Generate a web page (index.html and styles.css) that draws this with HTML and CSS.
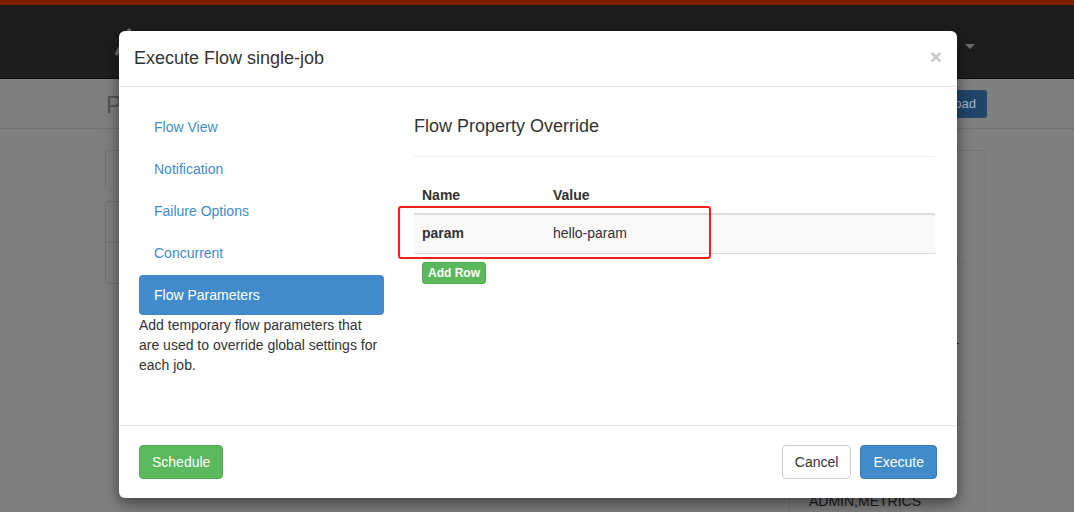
FILE: index.html
```html
<!DOCTYPE html>
<html>
<head>
<meta charset="utf-8">
<link rel="stylesheet" href="styles.css">
</head>
<body>
<div class="page">
  <div class="topbar"></div>
  <div class="navbar">
    <svg class="logo" width="40" height="40" viewBox="0 0 40 40"><polyline points="3,31 16,6 29,31" fill="none" stroke="#6e6e6e" stroke-width="3.5" stroke-linejoin="round"/></svg>
    <div class="user">n <span class="caret"></span></div>
  </div>
  <div class="pagehead">
    <div class="ph-title">Project</div>
    <div class="ph-btn">Upload</div>
  </div>
  <div class="main">
    <div class="leftcol">
      <div class="tabs"></div>
      <div class="listbox"><div class="li"></div><div class="li"></div></div>
    </div>
    <div class="sidepanel">
      <div class="sp-row sp-a"></div>
      <div class="sp-row sp-b"><span class="dash">-</span></div>
      <div class="sp-row sp-c"></div>
      <div class="sp-text">ADMIN,METRICS</div>
    </div>
  </div>
</div>

<div class="modal">
  <div class="modal-header">
    <span class="close">&times;</span>
    <h4 class="modal-title">Execute Flow single-job</h4>
  </div>
  <div class="modal-body">
    <div class="col-nav">
      <ul class="nav">
        <li><a>Flow View</a></li>
        <li><a>Notification</a></li>
        <li><a>Failure Options</a></li>
        <li><a>Concurrent</a></li>
        <li class="active"><a>Flow Parameters</a></li>
      </ul>
      <p class="help">Add temporary flow parameters that are used to override global settings for each job.</p>
    </div>
    <div class="col-main">
      <h4 class="sec-title">Flow Property Override</h4>
      <hr class="sep">
      <table class="props">
        <thead><tr><th class="c1">Name</th><th>Value</th></tr></thead>
        <tbody><tr><td class="c1"><b>param</b></td><td>hello-param</td></tr></tbody>
      </table>
      <div class="addrow"><span class="btn-xs">Add Row</span></div>
    </div>
  </div>
  <div class="modal-footer">
    <span class="btn btn-green">Schedule</span>
    <span class="spacer"></span>
    <span class="btn btn-default">Cancel</span>
    <span class="btn btn-blue">Execute</span>
  </div>
</div>
<div class="highlight"></div>
</body>
</html>
```
FILE: styles.css
```css
html, body {
  margin: 0;
  padding: 0;
}
body {
  width: 1074px;
  height: 512px;
  overflow: hidden;
  background: #7f7f7f;
  font-family: "Liberation Sans", Arial, sans-serif;
  font-size: 14px;
  line-height: 20px;
  color: #333;
  position: relative;
}
.topbar {
  height: 5px;
  background: #7f1d00;
}
.navbar {
  height: 73px;
  background: #1d1d1d;
  border-bottom: 1px solid #0e0e0e;
  display: flex;
  align-items: flex-start;
  padding: 0 99px 0 113px;
}
.logo {
  margin-top: 19px;
}
.user {
  margin-left: auto;
  margin-top: 30px;
  color: #6b6b6b;
  font-size: 15px;
}
.caret {
  display: inline-block;
  width: 0;
  height: 0;
  margin-left: 3px;
  vertical-align: middle;
  border-top: 5px solid #6b6b6b;
  border-left: 5px solid transparent;
  border-right: 5px solid transparent;
}
.pagehead {
  height: 49px;
  border-bottom: 1px solid #727272;
  display: flex;
  align-items: flex-start;
  padding: 0 87px 0 106px;
}
.ph-title {
  font-size: 24px;
  line-height: 28px;
  margin-top: 12px;
  color: #525252;
}
.ph-btn {
  margin-left: auto;
  margin-top: 11px;
  height: 28px;
  line-height: 28px;
  padding: 0 11px;
  background: #21466a;
  border-radius: 3px;
  color: #a8b2bd;
  font-size: 13px;
}
.main {
  display: flex;
  padding: 21px 87px 0 105px;
  gap: 60px;
}
.leftcol {
  width: 624px;
}
.tabs {
  height: 35px;
  border: 1px solid #707070;
  border-bottom: none;
  border-radius: 4px 4px 0 0;
}
.listbox {
  margin-top: 15px;
  height: 81px;
  border: 1px solid #707070;
  border-radius: 4px;
}
.listbox .li {
  height: 40px;
  border-bottom: 1px solid #707070;
}
.listbox .li:last-child {
  border-bottom: none;
}
.sidepanel {
  width: 197px;
  height: 380px;
  border: 1px solid #747474;
  border-radius: 4px;
  display: flex;
  flex-direction: column;
  padding: 0 19px 0 0;
  box-sizing: border-box;
}
.sp-row {
  border-bottom: 1px solid #767676;
}
.sp-a { height: 111px; }
.sp-b { height: 159px; position: relative; }
.dash {
  position: absolute;
  right: 7px;
  top: 70px;
  color: #111;
  font-size: 12px;
}
.sp-c { height: 0; border-bottom: none; }
.sp-text {
  margin-top: 68px;
  padding-left: 19px;
  color: #1a1a1a;
  font-size: 14px;
}

.modal {
  position: absolute;
  left: 119px;
  top: 31px;
  width: 838px;
  background: #fff;
  border-radius: 6px;
  box-shadow: 0 5px 15px rgba(0, 0, 0, 0.5);
}
.modal-header {
  padding: 15px;
  border-bottom: 1px solid #e5e5e5;
  height: 25px;
}
.modal-title {
  margin: 0;
  font-size: 18px;
  font-weight: normal;
  line-height: 25px;
  color: #333;
}
.close {
  float: right;
  font-size: 21px;
  font-weight: bold;
  line-height: 21px;
  color: #c8c8c8;
  margin: 0;
}
.modal-body {
  height: 298px;
  padding: 20px;
  display: flex;
  gap: 30px;
}
.col-nav {
  width: 245px;
}
.col-main {
  width: 521px;
}
.nav {
  list-style: none;
  margin: 0;
  padding: 0;
}
.nav li + li {
  margin-top: 2px;
}
.nav a {
  display: block;
  padding: 10px 15px;
  color: #428bca;
  border-radius: 4px;
}
.nav li.active a {
  background: #428bca;
  color: #fff;
}
.help {
  margin: 0;
  color: #333;
}
.sec-title {
  margin: 9px 0 0;
  font-size: 18px;
  font-weight: normal;
  line-height: 20px;
  color: #333;
}
.sep {
  margin: 20px 0 20px;
  border: 0;
  border-top: 1px solid #eee;
  height: 0;
}
.props {
  width: 100%;
  border-collapse: collapse;
}
.props th {
  text-align: left;
  padding: 8px;
  font-weight: bold;
  line-height: 20px;
  border-bottom: 2px solid #ddd;
}
.props td {
  padding: 8px 8px 10px;
  line-height: 20px;
  background: #f9f9f9;
  border-bottom: 1px solid #ddd;
}
.props .c1 {
  width: 115px;
}
.addrow {
  margin-top: 8px;
  padding-left: 8px;
}
.btn-xs {
  display: inline-block;
  background: #5cb85c;
  border: 1px solid #4cae4c;
  color: #fff;
  font-size: 12px;
  font-weight: bold;
  line-height: 18px;
  padding: 1px 5px;
  border-radius: 3px;
}
.modal-footer {
  border-top: 1px solid #e5e5e5;
  padding: 19px 20px;
  display: flex;
  gap: 9px;
}
.spacer {
  flex: 1;
}
.btn {
  display: inline-block;
  padding: 6px 12px;
  line-height: 20px;
  font-size: 14px;
  border-radius: 4px;
  border: 1px solid transparent;
}
.btn-green {
  background: #5cb85c;
  border-color: #4cae4c;
  color: #fff;
}
.btn-default {
  background: #fff;
  border-color: #ccc;
  color: #333;
}
.btn-blue {
  background: #428bca;
  border-color: #357ebd;
  color: #fff;
}
.highlight {
  position: absolute;
  left: 398px;
  top: 206px;
  width: 309px;
  height: 49px;
  border: 2px solid #f0201a;
  border-radius: 3px;
}
```
